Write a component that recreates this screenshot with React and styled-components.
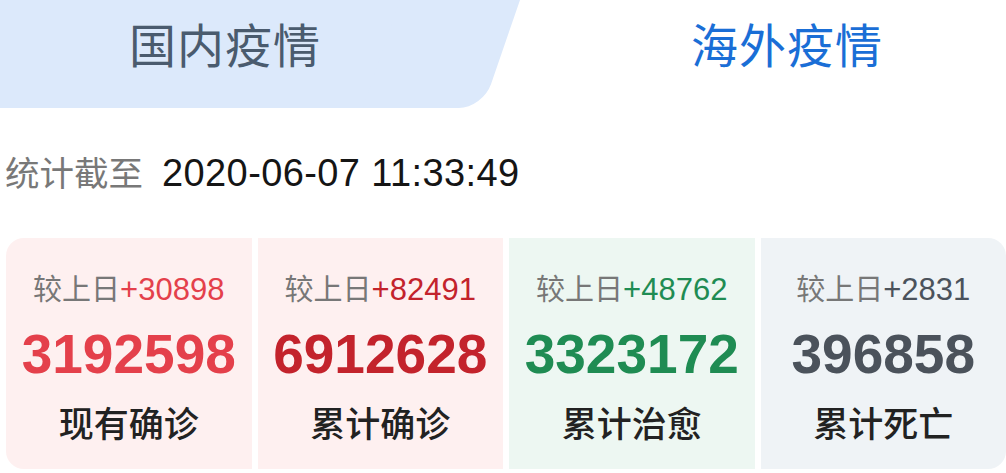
import React from 'react'
import styled, { createGlobalStyle } from 'styled-components'

const GlobalStyle = createGlobalStyle`
  body {
    margin: 0;
    background: #ffffff;
    font-family: "Liberation Sans", "Noto Sans CJK SC", sans-serif;
  }
`

const stats = [
  { label: '现有确诊', value: '3192598', delta: '+30898', tone: 'red' },
  { label: '累计确诊', value: '6912628', delta: '+82491', tone: 'darkred' },
  { label: '累计治愈', value: '3323172', delta: '+48762', tone: 'green' },
  { label: '累计死亡', value: '396858', delta: '+2831', tone: 'gray' },
]

const tones = {
  red: { bg: '#fef0f0', fg: '#e4404b' },
  darkred: { bg: '#fef0f0', fg: '#c3232c' },
  green: { bg: '#edf7f2', fg: '#1f8c53' },
  gray: { bg: '#eff3f6', fg: '#4b525b' },
}

function App() {
  return (
    <Page>
      <GlobalStyle />
      <TabBar>
        <LeftTab>
          <TabText>国内疫情</TabText>
        </LeftTab>
        <RightTab>
          <TabText active>海外疫情</TabText>
        </RightTab>
      </TabBar>

      <DateRow>
        <DateLabel>统计截至</DateLabel>
        <DateValue>2020-06-07 11:33:49</DateValue>
      </DateRow>

      <CardRow>
        {stats.map((s) => (
          <Card key={s.label} tone={s.tone}>
            <Delta>
              <DeltaLabel>较上日</DeltaLabel>
              <DeltaNum tone={s.tone}>{s.delta}</DeltaNum>
            </Delta>
            <BigNum tone={s.tone}>{s.value}</BigNum>
            <CardLabel>{s.label}</CardLabel>
          </Card>
        ))}
      </CardRow>
    </Page>
  )
}

export default App

const Page = styled.div`
  width: 1006px;
  height: 473px;
  overflow: hidden;
  background: #ffffff;
`

const TabBar = styled.div`
  display: flex;
  height: 108px;
`

const LeftTab = styled.div`
  position: relative;
  width: 450px;
  background: #dce9fb;
  display: flex;
  align-items: center;
  justify-content: center;
  padding-bottom: 22px;
  box-sizing: border-box;

  &::after {
    content: '';
    position: absolute;
    top: 0;
    left: 400px;
    width: 120px;
    height: 100%;
    background: #dce9fb;
    transform: skewX(-19deg);
    transform-origin: top left;
    border-bottom-right-radius: 24px;
  }
`

const RightTab = styled.div`
  flex: 1;
  display: flex;
  align-items: center;
  justify-content: center;
  padding-left: 118px;
  padding-bottom: 22px;
`

const TabText = styled.div`
  position: relative;
  z-index: 1;
  font-family: "Noto Sans CJK SC", sans-serif;
  font-size: 47px;
  line-height: 56px;
  letter-spacing: 1px;
  color: ${(p) => (p.active ? '#1a6ed6' : '#4a5b6e')};
`

const DateRow = styled.div`
  display: flex;
  align-items: baseline;
  gap: 19px;
  padding: 38px 0 0 5px;
  height: 88px;
  box-sizing: border-box;
`

const DateLabel = styled.span`
  font-family: "Noto Sans CJK SC", sans-serif;
  font-size: 34.5px;
  color: #787878;
`

const DateValue = styled.span`
  font-family: "Liberation Sans", sans-serif;
  font-size: 38px;
  letter-spacing: 0.4px;
  color: #151515;
`

const CardRow = styled.div`
  display: flex;
  gap: 6px;
  margin: 42px 0 0 6px;
  border-radius: 18px;
  overflow: hidden;
`

const Card = styled.div`
  flex: 1;
  display: flex;
  flex-direction: column;
  align-items: center;
  background: ${(p) => tones[p.tone].bg};
  padding: 29px 0 25px;
`

const Delta = styled.div`
  display: flex;
  align-items: baseline;
  line-height: 40px;
  height: 40px;
`

const DeltaLabel = styled.span`
  font-family: "Noto Sans CJK SC", sans-serif;
  font-size: 29px;
  color: #777777;
`

const DeltaNum = styled.span`
  font-family: "Liberation Sans", sans-serif;
  font-size: 31px;
  color: ${(p) => tones[p.tone].fg};
`

const BigNum = styled.div`
  font-family: "Liberation Sans", sans-serif;
  font-weight: 700;
  font-size: 55px;
  line-height: 64px;
  margin-top: 15px;
  color: ${(p) => tones[p.tone].fg};
`

const CardLabel = styled.div`
  font-family: "Noto Sans CJK SC", sans-serif;
  font-weight: 500;
  font-size: 35px;
  line-height: 44px;
  margin-top: 14px;
  color: #222222;
`
